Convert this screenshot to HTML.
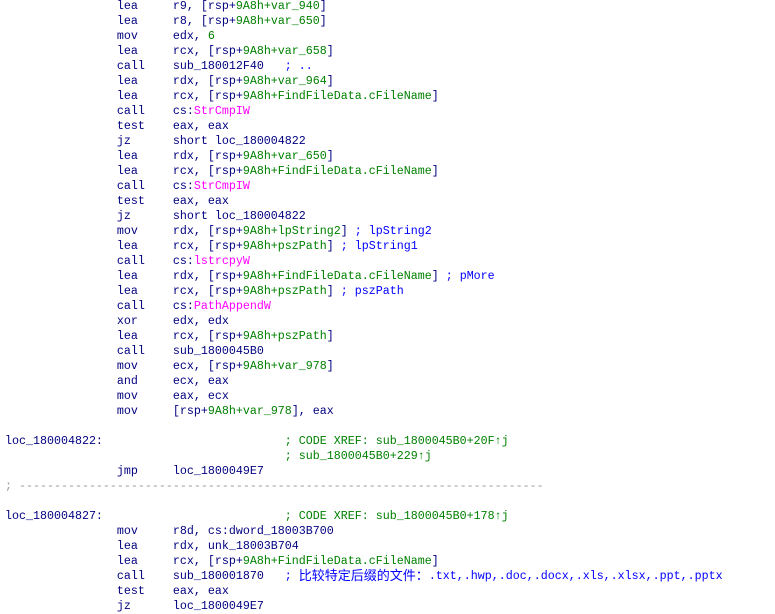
<!DOCTYPE html>
<html><head><meta charset="utf-8"><style>
html,body{margin:0;padding:0;background:#fff;width:775px;height:613px;overflow:hidden}
pre{margin:0;position:absolute;left:5px;top:-1px;font-family:"Liberation Mono","Noto Sans CJK SC",monospace;font-size:11.67px;line-height:15px;color:#000080}
.g{color:#008000}.m{color:#ff00ff}.c{color:#0000ff}.x{color:#008000}.d{color:#999}
.z{font-family:"Noto Sans CJK SC",sans-serif;font-size:13px;line-height:0;display:inline-block;height:15px;vertical-align:top;position:relative;top:-2px}
</style></head><body><pre>                lea     r9, [rsp+<span class="g">9A8h+var_940</span>]
                lea     r8, [rsp+<span class="g">9A8h+var_650</span>]
                mov     edx, <span class="g">6</span>
                lea     rcx, [rsp+<span class="g">9A8h+var_658</span>]
                call    sub_180012F40   <span class="c">; ..</span>
                lea     rdx, [rsp+<span class="g">9A8h+var_964</span>]
                lea     rcx, [rsp+<span class="g">9A8h+FindFileData.cFileName</span>]
                call    cs:<span class="m">StrCmpIW</span>
                test    eax, eax
                jz      short loc_180004822
                lea     rdx, [rsp+<span class="g">9A8h+var_650</span>]
                lea     rcx, [rsp+<span class="g">9A8h+FindFileData.cFileName</span>]
                call    cs:<span class="m">StrCmpIW</span>
                test    eax, eax
                jz      short loc_180004822
                mov     rdx, [rsp+<span class="g">9A8h+lpString2</span>] <span class="c">; lpString2</span>
                lea     rcx, [rsp+<span class="g">9A8h+pszPath</span>] <span class="c">; lpString1</span>
                call    cs:<span class="m">lstrcpyW</span>
                lea     rdx, [rsp+<span class="g">9A8h+FindFileData.cFileName</span>] <span class="c">; pMore</span>
                lea     rcx, [rsp+<span class="g">9A8h+pszPath</span>] <span class="c">; pszPath</span>
                call    cs:<span class="m">PathAppendW</span>
                xor     edx, edx
                lea     rcx, [rsp+<span class="g">9A8h+pszPath</span>]
                call    sub_1800045B0
                mov     ecx, [rsp+<span class="g">9A8h+var_978</span>]
                and     ecx, eax
                mov     eax, ecx
                mov     [rsp+<span class="g">9A8h+var_978</span>], eax

loc_180004822:                          <span class="x">; CODE XREF: sub_1800045B0+20F↑j</span>
                                        <span class="x">; sub_1800045B0+229↑j</span>
                jmp     loc_1800049E7
<span class="d">; ---------------------------------------------------------------------------</span>

loc_180004827:                          <span class="x">; CODE XREF: sub_1800045B0+178↑j</span>
                mov     r8d, cs:dword_18003B700
                lea     rdx, unk_18003B704
                lea     rcx, [rsp+<span class="g">9A8h+FindFileData.cFileName</span>]
                call    sub_180001870   <span class="c">; <span class="z"><span style="line-height:15px;display:block">比较特定后缀的文件：</span></span>.txt,.hwp,.doc,.docx,.xls,.xlsx,.ppt,.pptx</span>
                test    eax, eax
                jz      loc_1800049E7
</pre></body></html>
